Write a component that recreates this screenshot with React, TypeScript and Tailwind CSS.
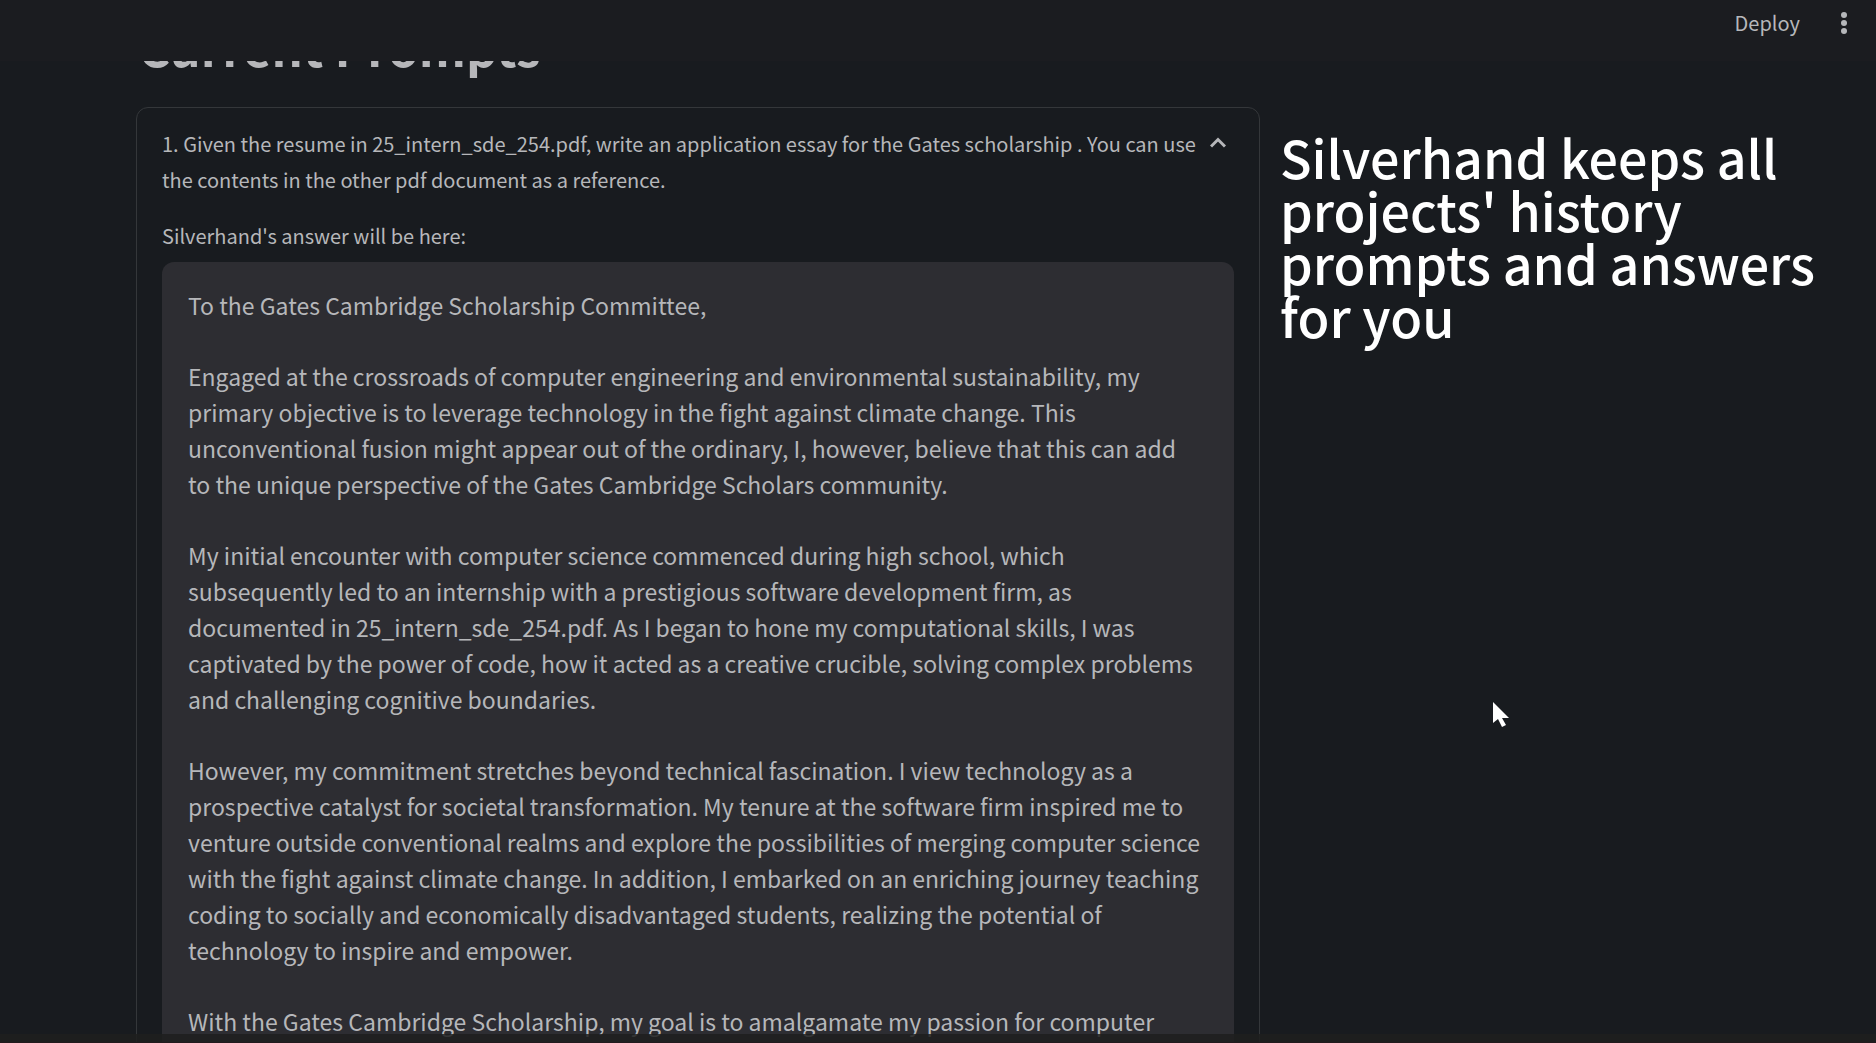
import React from "react";

const paragraphs = [
  "To the Gates Cambridge Scholarship Committee,",
  "Engaged at the crossroads of computer engineering and environmental sustainability, my primary objective is to leverage technology in the fight against climate change. This unconventional fusion might appear out of the ordinary, I, however, believe that this can add to the unique perspective of the Gates Cambridge Scholars community.",
  "My initial encounter with computer science commenced during high school, which subsequently led to an internship with a prestigious software development firm, as documented in 25_intern_sde_254.pdf. As I began to hone my computational skills, I was captivated by the power of code, how it acted as a creative crucible, solving complex problems and challenging cognitive boundaries.",
  "However, my commitment stretches beyond technical fascination. I view technology as a prospective catalyst for societal transformation. My tenure at the software firm inspired me to venture outside conventional realms and explore the possibilities of merging computer science with the fight against climate change. In addition, I embarked on an enriching journey teaching coding to socially and economically disadvantaged students, realizing the potential of technology to inspire and empower.",
  "With the Gates Cambridge Scholarship, my goal is to amalgamate my passion for computer",
];

function Header() {
  return (
    <header className="relative z-10 flex h-[61px] shrink-0 items-start justify-end gap-8 bg-[#1b1c20] pt-[7px] pr-5 text-[#b6b7ba]">
      <button type="button" className="text-[20px] leading-8">Deploy</button>
      <button type="button" aria-label="Main menu" className="flex h-8 w-6 items-center justify-center">
        <svg width="8" height="24" viewBox="0 0 8 24" fill="currentColor">
          <circle cx="4" cy="4" r="3" />
          <circle cx="4" cy="12" r="3" />
          <circle cx="4" cy="20" r="3" />
        </svg>
      </button>
    </header>
  );
}

function PromptCard() {
  return (
    <section className="rounded-xl border border-[#34373a] px-[25px] pt-[18px] pb-6">
      <button type="button" aria-expanded="true" className="flex w-full items-start justify-between gap-2 text-left">
        <span className="text-[20px] leading-9">
          1. Given the resume in 25_intern_sde_254.pdf, write an application essay for the Gates scholarship . You can use the contents in the other pdf document as a reference.
        </span>
        <svg width="16" height="12" viewBox="0 0 16 12" className="mt-[10px] mr-2 shrink-0" fill="none" stroke="currentColor" strokeWidth="3">
          <path d="M1 10.5 8 3.5 15 10.5" />
        </svg>
      </button>
      <p className="mt-5 text-[20px] leading-9">Silverhand&apos;s answer will be here:</p>
      <div className="mt-2 flex flex-col gap-[35px] rounded-xl bg-[#2d2d32] pt-[25px] pr-8 pb-6 pl-[26px] text-[23px] leading-9">
        {paragraphs.map((text) => (
          <p key={text.slice(0, 12)}>{text}</p>
        ))}
      </div>
    </section>
  );
}

export default function App() {
  return (
    <div className="relative flex h-screen flex-col overflow-hidden bg-[#181b1f] font-['Noto_Sans_CJK_SC',sans-serif] text-[#b6b7ba]">
      <Header />
      <main className="grid min-h-0 flex-1 grid-cols-[1124fr_576fr] gap-5 overflow-hidden pr-5 pl-[136px]">
        <div className="-mt-11">
          <h2 className="mb-8 pl-0.5 text-[49px] leading-[58px] font-bold">Current Prompts</h2>
          <PromptCard />
        </div>
        <p className="pt-[69px] text-[52px] leading-[53px] font-medium text-white">
          Silverhand keeps all projects&apos; history prompts and answers for you
        </p>
      </main>
      <div className="absolute inset-x-0 bottom-0 h-[9px] border-b border-[#221a1d] bg-[#1e1e1e]/85" />
      <svg className="absolute top-[702px] left-[1493px]" width="18" height="26" viewBox="0 0 18 26" fill="#fff">
        <path d="M0 0v21l5-4 4 8 4-2-4-7h7z" />
      </svg>
    </div>
  );
}
